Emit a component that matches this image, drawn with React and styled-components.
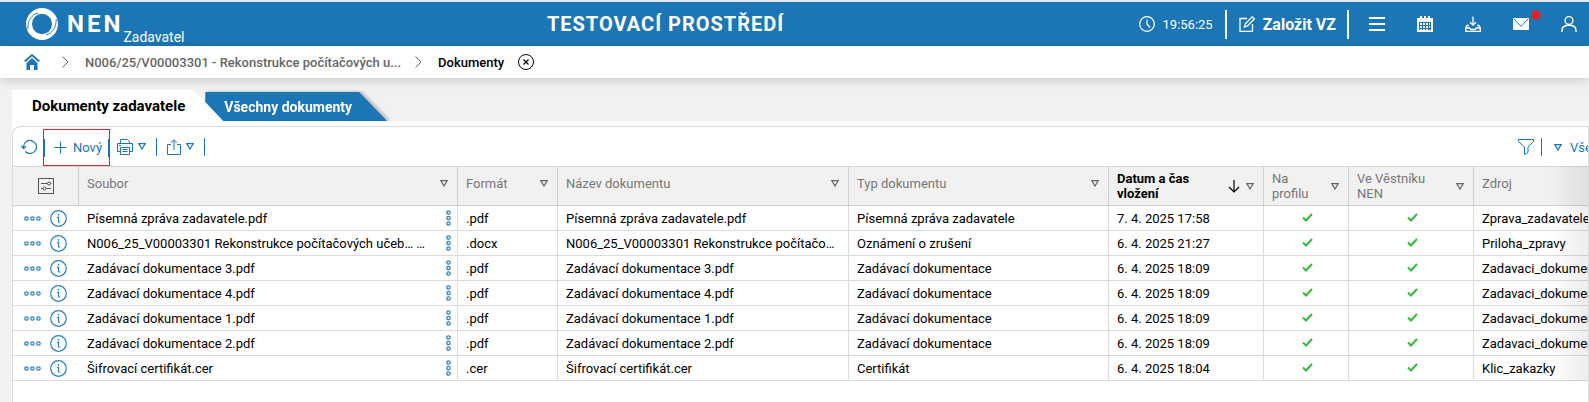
import React from "react";
import styled, { createGlobalStyle } from "styled-components";

const columns = [
  { key: "name", label: "Soubor", width: 379 },
  { key: "format", label: "Formát", width: 100 },
  { key: "title", label: "Název dokumentu", width: 291 },
  { key: "type", label: "Typ dokumentu", width: 260 },
  { key: "date", label: "Datum a čas vložení", width: 155, sorted: true, tall: true },
  { key: "profile", label: "Na profilu", width: 85, check: true, tall: true },
  { key: "bulletin", label: "Ve Věstníku NEN", width: 125, check: true, tall: true },
  { key: "source", label: "Zdroj" },
];

const doc = (name, format, type, date, source, title = name) => ({
  name,
  format,
  title,
  type,
  date,
  profile: true,
  bulletin: true,
  source,
});

const rows = [
  doc("Písemná zpráva zadavatele.pdf", ".pdf", "Písemná zpráva zadavatele", "7. 4. 2025 17:58", "Zprava_zadavatele"),
  doc(
    "N006_25_V00003301 Rekonstrukce počítačových učeb… …",
    ".docx",
    "Oznámení o zrušení",
    "6. 4. 2025 21:27",
    "Priloha_zpravy",
    "N006_25_V00003301 Rekonstrukce počítačo…"
  ),
  doc("Zadávací dokumentace 3.pdf", ".pdf", "Zadávací dokumentace", "6. 4. 2025 18:09", "Zadavaci_dokumentace"),
  doc("Zadávací dokumentace 4.pdf", ".pdf", "Zadávací dokumentace", "6. 4. 2025 18:09", "Zadavaci_dokumentace"),
  doc("Zadávací dokumentace 1.pdf", ".pdf", "Zadávací dokumentace", "6. 4. 2025 18:09", "Zadavaci_dokumentace"),
  doc("Zadávací dokumentace 2.pdf", ".pdf", "Zadávací dokumentace", "6. 4. 2025 18:09", "Zadavaci_dokumentace"),
  doc("Šifrovací certifikát.cer", ".cer", "Certifikát", "6. 4. 2025 18:04", "Klic_zakazky"),
];

const Icon = ({ w = 16, h = w, children, ...rest }) => (
  <svg
    width={w}
    height={h}
    viewBox={`0 0 ${w} ${h}`}
    fill="none"
    stroke="currentColor"
    aria-hidden="true"
    {...rest}
  >
    {children}
  </svg>
);

const LogoMark = () => (
  <Icon w={32}>
    <path
      fill="#fff"
      stroke="none"
      fillRule="evenodd"
      d="M16 0a16 16 0 1 1 0 32a16 16 0 0 1 0-32zM16 5.800a10 10.200 0 1 0 0 20.400a10 10.200 0 0 0 0-20.400z"
    />
    <path d="M1.800 21C1.600 12 6 6.500 12 5" stroke="#1c75b5" strokeWidth=".9" />
    <path d="M30.200 11C30.400 20 26 25.500 20 27" stroke="#1c75b5" strokeWidth=".9" />
  </Icon>
);

const HomeIcon = () => (
  <Icon w={16}>
    <path d="M.7 7.500L8 1l7.300 6.500" strokeWidth="1.800" />
    <path d="M2.500 9L8 4l5.500 5v7H10v-5H6v5H2.500z" fill="currentColor" stroke="none" />
  </Icon>
);

const ChevronIcon = () => (
  <Icon w={7} h={12}>
    <path d="M.5.5l5.500 5.500l-5.500 5.500" />
  </Icon>
);

const CloseIcon = () => (
  <Icon w={16}>
    <circle cx="8" cy="8" r="7.500" />
    <path d="M5.500 5.500l5 5m0-5l-5 5" strokeWidth="1.200" />
  </Icon>
);

const ClockIcon = () => (
  <Icon w={16}>
    <circle cx="8" cy="8" r="7.300" strokeWidth="1.300" />
    <path d="M8 3.500V8l3 3.500" strokeWidth="1.200" />
  </Icon>
);

const EditIcon = () => (
  <Icon w={16} strokeWidth="1.300">
    <path d="M8 2.500H1v13h12.500V8" />
    <path d="M5.500 11l.8-3.200L13.200.8l2.200 2.200l-7 7z" />
  </Icon>
);

const MenuIcon = () => (
  <Icon w={16} strokeWidth="2">
    <path d="M0 2h16M0 8h16M0 14h16" />
  </Icon>
);

const CalendarIcon = () => (
  <Icon w={16} stroke="none">
    <path
      fill="currentColor"
      fillRule="evenodd"
      d="M0 2h3V0h2v2h2V0h2v2h2V0h2v2h3v14H0zM2 6v8h12V6z"
    />
    <path
      fill="currentColor"
      d="M6 7h2v2H6zM9 7h2v2H9zM12 7h1v2h-1zM3 7h2v2H3zM3 10h2v2H3zM6 10h2v2H6zM9 10h2v2H9zM12 10h1v2h-1zM3 13h2v1H3zM6 13h2v1H6zM9 13h2v1H9z"
    />
  </Icon>
);

const DownloadIcon = () => (
  <Icon w={16} strokeWidth="1.300">
    <path d="M8 0.500v8.500M5 6.200l3 3l3-3" />
    <path d="M4 9.500H2L.7 12v3.300h14.600V12L14 9.500h-2M.7 12h4l1 1.500h4.600l1-1.500h4" />
  </Icon>
);

const MailIcon = () => (
  <Icon w={16} h={12}>
    <rect width="16" height="12" rx="1" fill="currentColor" stroke="none" />
    <path d="M1 1l7 7.500L15 1" stroke="#1c75b5" />
  </Icon>
);

const UserIcon = () => (
  <Icon w={16} strokeWidth="1.400">
    <circle cx="8" cy="4.500" r="3.900" />
    <path d="M1 16v-1.500C1 11 4 9.300 8 9.300s7 1.700 7 5.200V16" />
  </Icon>
);

const RefreshIcon = () => (
  <Icon w={16}>
    <path d="M2.500 9.500V7.500a6.500 6.500 0 1 1 1.800 5" strokeWidth="1.200" />
    <path d="M.3 6.800l2.200 2.700l2.500-2.400" strokeWidth="1.200" />
  </Icon>
);

const PlusIcon = () => (
  <Icon w={13}>
    <path d="M6.500 0.500v12M0.500 6.500h12" />
  </Icon>
);

const PrintIcon = () => (
  <Icon w={16}>
    <path d="M3.500 4.500v-4h7l2 2v2M3.500 12.500h-3v-8h15v8h-3" />
    <path d="M3.500 8.500h9v7h-9zM5.500 10.500h5M5.500 12.500h5M2 6.500h2" />
  </Icon>
);

const ShareIcon = () => (
  <Icon w={14} h={16}>
    <path d="M4 5.500H.5v10h13v-10H10M7 11V1M4 3.800L7 .8l3 3" />
  </Icon>
);

const Triangle = () => (
  <Icon w={8} h={7}>
    <path d="M.8.6h6.400L4 6z" strokeWidth="1.200" />
  </Icon>
);

const FunnelIcon = () => (
  <Icon w={16}>
    <path d="M.5.500h15v2L10 8v5.500l-3.500 2V8L.5 2.500z" />
  </Icon>
);

const SettingsIcon = () => (
  <Icon w={16}>
    <rect x=".5" y=".5" width="15" height="15" />
    <path d="M3 5.500h6M3 10.500h2M8.500 10.500H13M12.500 5.500h1" />
    <circle cx="11" cy="5.500" r="1.500" />
    <circle cx="6.500" cy="10.500" r="1.500" />
  </Icon>
);

const DotsIcon = ({ vertical }) =>
  vertical ? (
    <Icon w={5} h={16} strokeWidth="1.200">
      <circle cx="2.500" cy="2.500" r="1.700" />
      <circle cx="2.500" cy="8" r="1.700" />
      <circle cx="2.500" cy="13.500" r="1.700" />
    </Icon>
  ) : (
    <Icon w={17} h={5} strokeWidth="1.200">
      <circle cx="2.500" cy="2.500" r="1.700" />
      <circle cx="8.500" cy="2.500" r="1.700" />
      <circle cx="14.500" cy="2.500" r="1.700" />
    </Icon>
  );

const InfoIcon = () => (
  <Icon w={17}>
    <circle cx="8.500" cy="8.500" r="7.800" strokeWidth="1.200" />
    <path d="M7 7.300h1.500v4.200q0 .8 1.500.5" strokeWidth="1.200" />
    <circle cx="8.500" cy="4.800" r=".5" fill="currentColor" />
  </Icon>
);

const SortIcon = () => (
  <Icon w={12} h={13}>
    <path d="M6 0v12M1 7l5 5l5-5" strokeWidth="1.200" />
  </Icon>
);

const CheckIcon = () => (
  <Icon w={11} h={9}>
    <path d="M1 4.500l3 3L10 1" stroke="#35b83c" strokeWidth="2" />
  </Icon>
);

const App = () => {
  return (
    <Page>
      <GlobalStyle />
      <TopBar>
        <Brand href="#">
          <LogoMark />
          <strong>NEN</strong>
          <span>Zadavatel</span>
        </Brand>
        <Environment>TESTOVACÍ PROSTŘEDÍ</Environment>
        <TopActions>
          <Clock>
            <ClockIcon />
            19:56:25
          </Clock>
          <CreateButton>
            <EditIcon />
            Založit VZ
          </CreateButton>
          <IconNav>
            <IconButton aria-label="Menu"><MenuIcon /></IconButton>
            <IconButton aria-label="Kalendář"><CalendarIcon /></IconButton>
            <IconButton aria-label="Stažené soubory"><DownloadIcon /></IconButton>
            <IconButton aria-label="Zprávy">
              <MailIcon />
              <Badge />
            </IconButton>
            <IconButton aria-label="Uživatel"><UserIcon /></IconButton>
          </IconNav>
        </TopActions>
      </TopBar>

      <Breadcrumbs>
        <HomeLink href="#" aria-label="Domů"><HomeIcon /></HomeLink>
        <ChevronIcon />
        <Crumb href="#">N006/25/V00003301 - Rekonstrukce počítačových u...</Crumb>
        <ChevronIcon />
        <Crumb href="#" $current>Dokumenty</Crumb>
        <CloseButton aria-label="Zavřít"><CloseIcon /></CloseButton>
      </Breadcrumbs>

      <Content>
        <Tabs>
          <ActiveTab>Dokumenty zadavatele</ActiveTab>
          <TabShade>
            <Tab>Všechny dokumenty</Tab>
          </TabShade>
        </Tabs>
        <PanelWrap>
          <Panel>
            <Toolbar>
              <ToolButton aria-label="Obnovit"><RefreshIcon /></ToolButton>
              <NewButton><PlusIcon />Nový</NewButton>
              <ToolButton aria-label="Tisk"><PrintIcon /><Triangle /></ToolButton>
              <Divider />
              <ToolButton aria-label="Export"><ShareIcon /><Triangle /></ToolButton>
              <Divider />
              <FilterGroup>
                <ToolButton aria-label="Filtr"><FunnelIcon /></ToolButton>
                <ViewButton><Triangle />Všechny</ViewButton>
              </FilterGroup>
            </Toolbar>
            <TableArea>
              <Table>
                <colgroup>
                  <Col $width={66} />
                  {columns.map((col) => (
                    <Col key={col.key} $width={col.width} />
                  ))}
                </colgroup>
                <thead>
                  <tr>
                    <HeadCell>
                      <SettingsButton aria-label="Nastavení sloupců"><SettingsIcon /></SettingsButton>
                    </HeadCell>
                    {columns.map((col) => (
                      <HeadCell key={col.key} $sorted={col.sorted}>
                        <HeadInner $tall={col.tall}>
                          <span>{col.label}</span>
                          {col.sorted && <SortIcon />}
                          {col.width && <FilterButton aria-label={`Filtr ${col.label}`}><Triangle /></FilterButton>}
                        </HeadInner>
                      </HeadCell>
                    ))}
                  </tr>
                </thead>
                <tbody>
                  {rows.map((row) => (
                    <tr key={row.name}>
                      <Cell>
                        <RowActions>
                          <RowButton aria-label="Akce"><DotsIcon /></RowButton>
                          <RowButton aria-label="Detail"><InfoIcon /></RowButton>
                        </RowActions>
                      </Cell>
                      {columns.map((col) => (
                        <Cell key={col.key} $check={col.check}>
                          {col.key === "name" ? (
                            <FileName>
                              <span>{row.name}</span>
                              <RowButton aria-label="Možnosti souboru"><DotsIcon vertical /></RowButton>
                            </FileName>
                          ) : col.check ? (
                            <CheckIcon />
                          ) : (
                            row[col.key]
                          )}
                        </Cell>
                      ))}
                    </tr>
                  ))}
                </tbody>
              </Table>
              <EdgeShade />
            </TableArea>
          </Panel>
        </PanelWrap>
      </Content>
    </Page>
  );
};

const GlobalStyle = createGlobalStyle`
  * {
    box-sizing: border-box;
  }

  body {
    margin: 0;
    background-color: #f1f1f1;
    font-family: Roboto, "Liberation Sans", sans-serif;
    font-size: 13px;
    color: #000;
  }

  button {
    display: flex;
    align-items: center;
    padding: 0;
    border: none;
    background: none;
    font: inherit;
    color: inherit;
    cursor: pointer;
  }

  a {
    color: inherit;
    text-decoration: none;
  }

  svg {
    display: block;
    flex-shrink: 0;
  }
`;

const Page = styled.div`
  display: flex;
  flex-direction: column;
  min-height: 100vh;
  overflow: hidden;
`;

const TopBar = styled.header`
  display: flex;
  align-items: center;
  justify-content: space-between;
  height: 46px;
  padding: 0 12px 0 26px;
  border-top: 2px solid #e4e8eb;
  background-color: #1c75b5;
  color: #fff;
`;

const Brand = styled.a`
  display: flex;
  align-items: center;
  height: 44px;
  padding-right: 8px;

  strong {
    margin-left: 9px;
    font-size: 24px;
    font-weight: 700;
    letter-spacing: 3px;
  }

  span {
    align-self: flex-end;
    font-size: 14px;
    line-height: 18px;
  }
`;

const Environment = styled.div`
  font-size: 20px;
  font-weight: 700;
  letter-spacing: 1px;
`;

const TopActions = styled.div`
  display: flex;
  align-items: center;
  justify-content: flex-end;
`;

const Clock = styled.time`
  display: flex;
  align-items: center;
  gap: 8px;
  padding-right: 12px;
  font-size: 13px;
`;

const CreateButton = styled.button`
  gap: 8px;
  height: 29px;
  padding: 0 11px 0 12px;
  border-left: 2px solid #fff;
  border-right: 2px solid #fff;
  font-size: 16px;
  font-weight: 700;
`;

const IconNav = styled.nav`
  display: flex;
  align-items: center;
  gap: 32px;
  padding-left: 20px;
`;

const IconButton = styled.button`
  position: relative;
  height: 16px;
`;

const Badge = styled.span`
  position: absolute;
  top: -6px;
  right: -12px;
  width: 10px;
  height: 10px;
  border-radius: 50%;
  background-color: #cc2a30;
`;

const Breadcrumbs = styled.nav`
  display: flex;
  align-items: center;
  height: 32px;
  padding-left: 24px;
  background-color: #fff;
  color: #666;
  box-shadow: 0 2px 10px rgba(0, 0, 0, 0.16);
`;

const HomeLink = styled.a`
  margin-right: 22px;
  color: #1c75b5;
`;

const Crumb = styled.a`
  margin: 0 14px 0 16px;
  font-weight: 500;
  color: ${({ $current }) => ($current ? "#000" : "#666")};
`;

const CloseButton = styled.button`
  color: #000;
`;

const Content = styled.main`
  display: flex;
  flex-direction: column;
  flex: 1;
  padding: 12px 0 0 12px;
`;

const Tabs = styled.div`
  display: flex;
  align-items: flex-end;
  height: 31px;
`;

const ActiveTab = styled.button`
  height: 31px;
  padding: 0 40px 0 20px;
  background-color: #fff;
  font-size: 15px;
  font-weight: 700;
  clip-path: polygon(0 0, calc(100% - 32px) 0, 100% 100%, 0 100%);
`;

const TabShade = styled.div`
  margin-left: -20px;
  filter: drop-shadow(3px -1px 1px rgba(0, 0, 0, 0.18));
`;

const Tab = styled.button`
  height: 29px;
  padding: 0 35px 0 19px;
  background-color: #1c75b5;
  color: #fff;
  font-size: 14px;
  font-weight: 700;
  clip-path: polygon(0 0, calc(100% - 28px) 0, 100% 100%, 18px 100%, 0 10px);
`;

const PanelWrap = styled.div`
  display: flex;
  flex: 1;
  padding-top: 5px;
  background-color: #fff;
`;

const Panel = styled.section`
  flex: 1;
  min-width: 0;
  border: 1px solid #dcdcdc;
  border-bottom: none;
  border-radius: 8px 0 0 0;
`;

const Toolbar = styled.div`
  display: flex;
  align-items: center;
  height: 39px;
  padding-left: 8px;
  color: #1c75b5;
  overflow: hidden;
`;

const ToolButton = styled.button`
  gap: 5px;
`;

const NewButton = styled.button`
  gap: 6px;
  align-self: flex-end;
  height: 37px;
  margin: 0 7px 0 6px;
  border: 1px solid #e0242c;

  &::before,
  &::after {
    content: "";
    width: 1px;
    height: 18px;
    background-color: #1c75b5;
  }

  &::before {
    margin-right: 3px;
  }
`;

const Divider = styled.span`
  width: 1px;
  height: 18px;
  margin: 0 10px;
  background-color: #1c75b5;
`;

const FilterGroup = styled.div`
  display: flex;
  align-items: center;
  gap: 7px;
  width: 70px;
  margin-left: auto;
  white-space: nowrap;
`;

const ViewButton = styled.button`
  gap: 8px;
  height: 18px;
  padding: 2px 0 0 12px;
  border-left: 1px solid #1c75b5;
`;

const TableArea = styled.div`
  position: relative;
`;

const EdgeShade = styled.div`
  position: absolute;
  top: 0;
  right: 0;
  bottom: 0;
  width: 40px;
  background: linear-gradient(to right, rgba(0, 0, 0, 0), rgba(0, 0, 0, 0.07));
  pointer-events: none;
`;

const Table = styled.table`
  width: 100%;
  table-layout: fixed;
  border-collapse: separate;
  border-spacing: 0;
`;

const Col = styled.col`
  width: ${({ $width }) => ($width ? `${$width}px` : "auto")};
`;

const HeadCell = styled.th`
  height: 40px;
  padding: 0 8px;
  border-top: 1px solid #d6d6d6;
  border-right: 1px solid #d0d0d0;
  border-bottom: 1px solid #d0d0d0;
  background-color: #f1f1f1;
  color: ${({ $sorted }) => ($sorted ? "#000" : "#777")};
  font-weight: ${({ $sorted }) => ($sorted ? 700 : 400)};
  line-height: 15px;
  text-align: left;

  &:last-child {
    border-right: none;
  }
`;

const HeadInner = styled.div`
  display: flex;
  align-items: center;
  gap: 6px;
  padding-bottom: ${({ $tall }) => ($tall ? "0" : "6px")};

  span {
    flex: 1;
  }
`;

const FilterButton = styled.button`
  padding-right: 1px;
  color: #666;
`;

const SettingsButton = styled.button`
  margin: 0 auto;
  color: #555;
`;

const Cell = styled.td`
  height: 25px;
  padding: ${({ $check }) => ($check ? "0 7px 2px 9px" : "0 8px")};
  border-right: 1px solid #dcdcdc;
  border-bottom: 1px solid #dcdcdc;
  overflow: hidden;
  white-space: nowrap;

  > svg {
    margin: 0 auto;
  }

  &:first-child,
  &:last-child {
    border-right: none;
  }
`;

const RowActions = styled.div`
  display: flex;
  align-items: center;
  gap: 9px;
  padding-left: 3px;
`;

const RowButton = styled.button`
  color: #2b7fc0;
`;

const FileName = styled.div`
  display: flex;
  align-items: center;
  justify-content: space-between;
  margin-right: -2px;
`;

export default App;
